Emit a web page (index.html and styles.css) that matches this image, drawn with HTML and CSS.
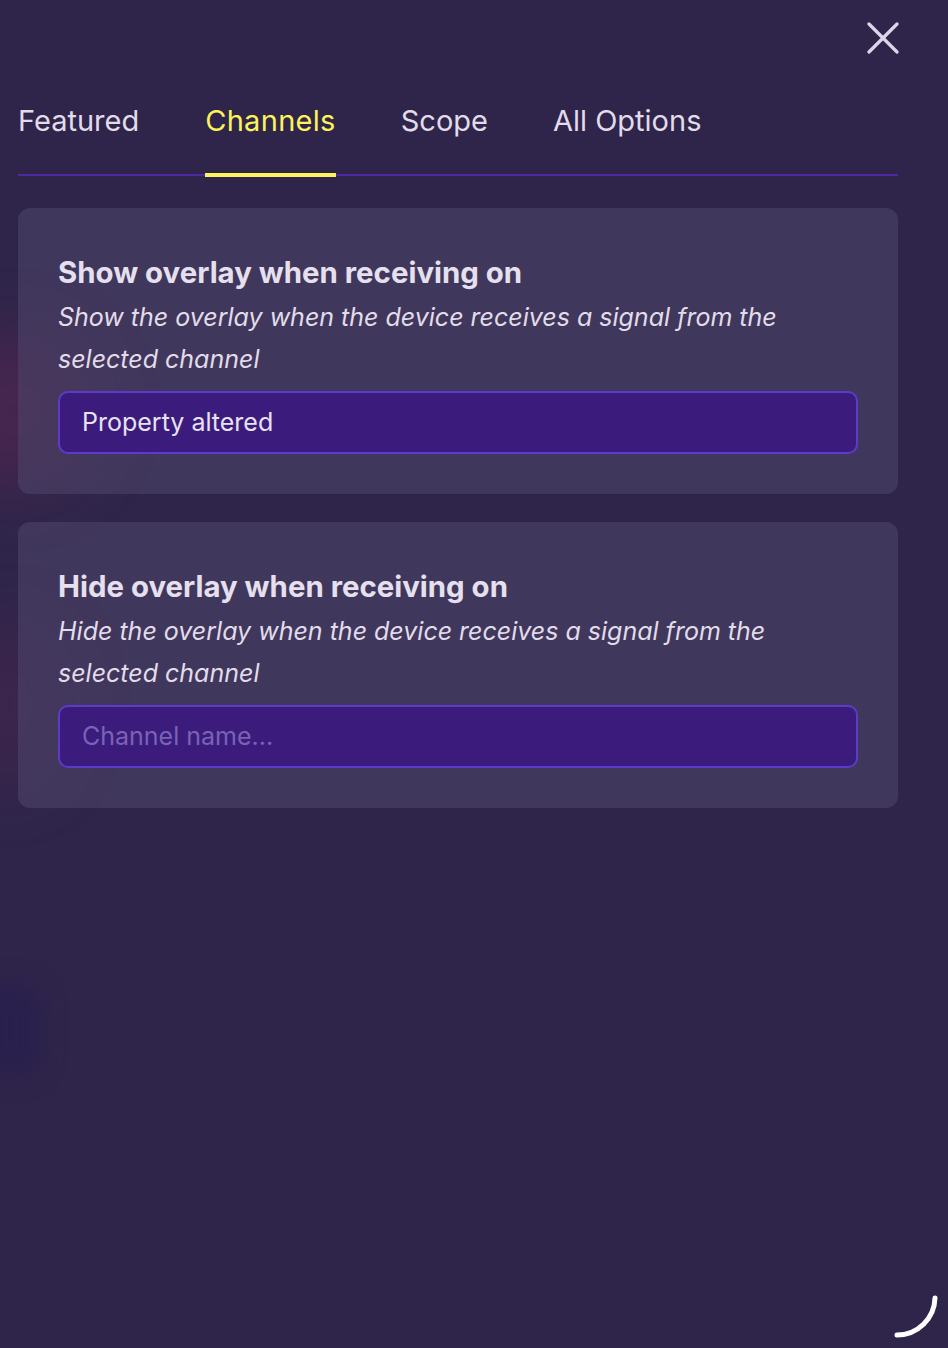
FILE: index.html
```html
<!DOCTYPE html>
<html lang="en">
<head>
<meta charset="utf-8">
<title>Channels</title>
<link rel="stylesheet" href="styles.css">
</head>
<body>
<div class="bg-blob blob-a"></div>
<div class="bg-blob blob-b"></div>
<div class="bg-blob blob-c"></div>
<main class="panel">
  <header class="header">
    <button class="close" aria-label="Close">
      <svg width="32" height="32" viewBox="0 0 32 32"><path d="M2 2 L30 30 M30 2 L2 30" stroke="#ddd6ea" stroke-width="3.2" stroke-linecap="round" fill="none"/></svg>
    </button>
  </header>
  <nav class="tabs">
    <span class="tab">Featured</span>
    <span class="tab active">Channels</span>
    <span class="tab">Scope</span>
    <span class="tab">All Options</span>
  </nav>
  <section class="card">
    <h2 class="card-title">Show overlay when receiving on</h2>
    <p class="card-desc">Show the overlay when the device receives a signal from the selected channel</p>
    <div class="field">Property altered</div>
  </section>
  <section class="card">
    <h2 class="card-title">Hide overlay when receiving on</h2>
    <p class="card-desc">Hide the overlay when the device receives a signal from the selected channel</p>
    <div class="field placeholder">Channel name...</div>
  </section>
</main>
<svg class="spinner" width="60" height="60" viewBox="0 0 60 60"><path d="M45 8 A38 38 0 0 1 7 45" stroke="#ffffff" stroke-width="5" stroke-linecap="round" fill="none"/></svg>
</body>
</html>
```

FILE: styles.css
```css
html, body {
  margin: 0;
  padding: 0;
}
body {
  background: #2f254a;
  font-family: Inter, "Noto Sans", sans-serif;
  color: #e6e0ee;
  min-height: 1348px;
  position: relative;
  overflow: hidden;
}
.bg-blob {
  position: absolute;
  border-radius: 50%;
  filter: blur(30px);
  pointer-events: none;
}
.blob-a {
  left: -70px;
  top: 330px;
  width: 170px;
  height: 160px;
  background: rgba(120, 40, 90, 0.3);
}
.blob-b {
  left: -50px;
  top: 620px;
  width: 120px;
  height: 170px;
  background: rgba(110, 40, 90, 0.2);
}
.blob-c {
  left: -20px;
  top: 985px;
  width: 60px;
  height: 90px;
  border-radius: 18px;
  filter: blur(12px);
  background: rgba(36, 28, 80, 0.6);
}
.panel {
  position: relative;
  padding: 0 50px 0 18px;
}
.header {
  display: flex;
  justify-content: flex-end;
  padding-top: 22px;
  height: 32px;
}
.close {
  background: none;
  border: 0;
  padding: 0;
  width: 32px;
  height: 32px;
  cursor: pointer;
  margin-right: -1px;
}
.close svg {
  display: block;
}
.tabs {
  display: flex;
  gap: 65px;
  margin-top: 50px;
  border-bottom: 2px solid #4a2a9e;
}
.tab {
  position: relative;
  font-size: 29px;
  line-height: 34px;
  padding-bottom: 36px;
  color: #e2dcea;
}
.tab:first-child {
  margin-right: 1px;
}
.tab.active {
  color: #fdf35a;
  letter-spacing: 0.3px;
}
.tab.active::after {
  content: "";
  position: absolute;
  left: 0;
  right: 0;
  bottom: -3px;
  height: 4px;
  background: #fdf35a;
}
.card {
  margin-top: 32px;
  background: rgba(76, 66, 104, 0.62);
  border-radius: 12px;
  padding: 48px 40px 40px;
}
.card + .card {
  margin-top: 28px;
}
.card-title {
  margin: 0;
  font-size: 29.4px;
  line-height: 34px;
  font-weight: 700;
  color: #e6e0ee;
}
.card-desc {
  margin: 6px 0 0;
  font-size: 25px;
  line-height: 42px;
  font-style: italic;
  color: #e2dcea;
  max-width: 760px;
}
.field {
  margin-top: 11px;
  height: 59px;
  box-sizing: content-box;
  border: 2px solid #5b3bca;
  border-radius: 10px;
  background: #3b1c7d;
  padding: 0 22px;
  font-size: 25px;
  line-height: 59px;
  color: #e8e2f2;
}
.field.placeholder {
  color: #7a62b6;
}
.spinner {
  position: absolute;
  left: 890px;
  top: 1290px;
}
```
